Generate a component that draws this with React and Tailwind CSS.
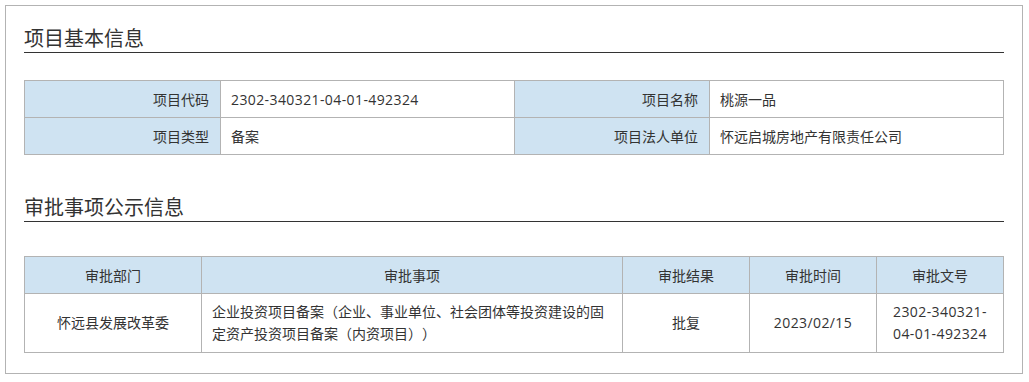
import React from 'react';

const basicRows = [
  [
    { label: '项目代码', value: '2302-340321-04-01-492324', numeric: true },
    { label: '项目名称', value: '桃源一品' },
  ],
  [
    { label: '项目类型', value: '备案' },
    { label: '项目法人单位', value: '怀远启城房地产有限责任公司' },
  ],
];

const approvals = [
  {
    dept: '怀远县发展改革委',
    item: '企业投资项目备案（企业、事业单位、社会团体等投资建设的固定资产投资项目备案（内资项目））',
    result: '批复',
    date: '2023/02/15',
    docNo: '2302-340321-04-01-492324',
  },
];

const SectionTitle = ({ children, className = '' }) => (
  <h2
    className={`text-[20px] leading-[24px] text-[#333] border-b border-[#333] pb-px ${className}`}
  >
    {children}
  </h2>
);

export default function App() {
  return (
    <div
      className="bg-white w-[1029px] h-[382px] pt-[5px] pl-[5px] [text-spacing-trim:space-all]"
      style={{ fontFamily: '"Open Sans", "Noto Sans CJK SC", sans-serif' }}
    >
      <div className="w-[1018px] h-[369px] border border-[#b3b3b3] px-[18px]">
        <SectionTitle className="mt-[21px]">项目基本信息</SectionTitle>

        <table className="w-full mt-[27px] border-collapse text-[14px] text-[#333] table-fixed">
          <colgroup>
            <col className="w-[196px]" />
            <col className="w-[294px]" />
            <col className="w-[195px]" />
            <col />
          </colgroup>
          <tbody>
            {basicRows.map((row, i) => (
              <tr key={i} className="h-[37px]">
                {row.map((cell) => (
                  <React.Fragment key={cell.label}>
                    <td className="border border-[#b3b3b3] bg-[#cfe3f2] text-right pr-[11px]">
                      {cell.label}
                    </td>
                    <td
                      className={`border border-[#b3b3b3] pl-[10px] ${
                        cell.numeric ? 'tracking-[0.4px]' : ''
                      }`}
                    >
                      {cell.value}
                    </td>
                  </React.Fragment>
                ))}
              </tr>
            ))}
          </tbody>
        </table>

        <SectionTitle className="mt-[41px]">审批事项公示信息</SectionTitle>

        <table className="w-full mt-[34px] border-collapse text-[14px] text-[#333] table-fixed">
          <colgroup>
            <col className="w-[177px]" />
            <col className="w-[421px]" />
            <col className="w-[127px]" />
            <col className="w-[127px]" />
            <col />
          </colgroup>
          <thead>
            <tr className="h-[37px] bg-[#cfe3f2]">
              {['审批部门', '审批事项', '审批结果', '审批时间', '审批文号'].map((h) => (
                <th key={h} className="border border-[#b3b3b3] font-normal text-center">
                  {h}
                </th>
              ))}
            </tr>
          </thead>
          <tbody>
            {approvals.map((a) => (
              <tr key={a.docNo} className="h-[59px] leading-[22px]">
                <td className="border border-[#b3b3b3] text-center">{a.dept}</td>
                <td className="border border-[#b3b3b3] px-[10px]">{a.item}</td>
                <td className="border border-[#b3b3b3] text-center">{a.result}</td>
                <td className="border border-[#b3b3b3] text-center tracking-[0.4px]">{a.date}</td>
                <td className="border border-[#b3b3b3] text-center px-[10px] tracking-[0.4px]">
                  {a.docNo}
                </td>
              </tr>
            ))}
          </tbody>
        </table>
      </div>
    </div>
  );
}
